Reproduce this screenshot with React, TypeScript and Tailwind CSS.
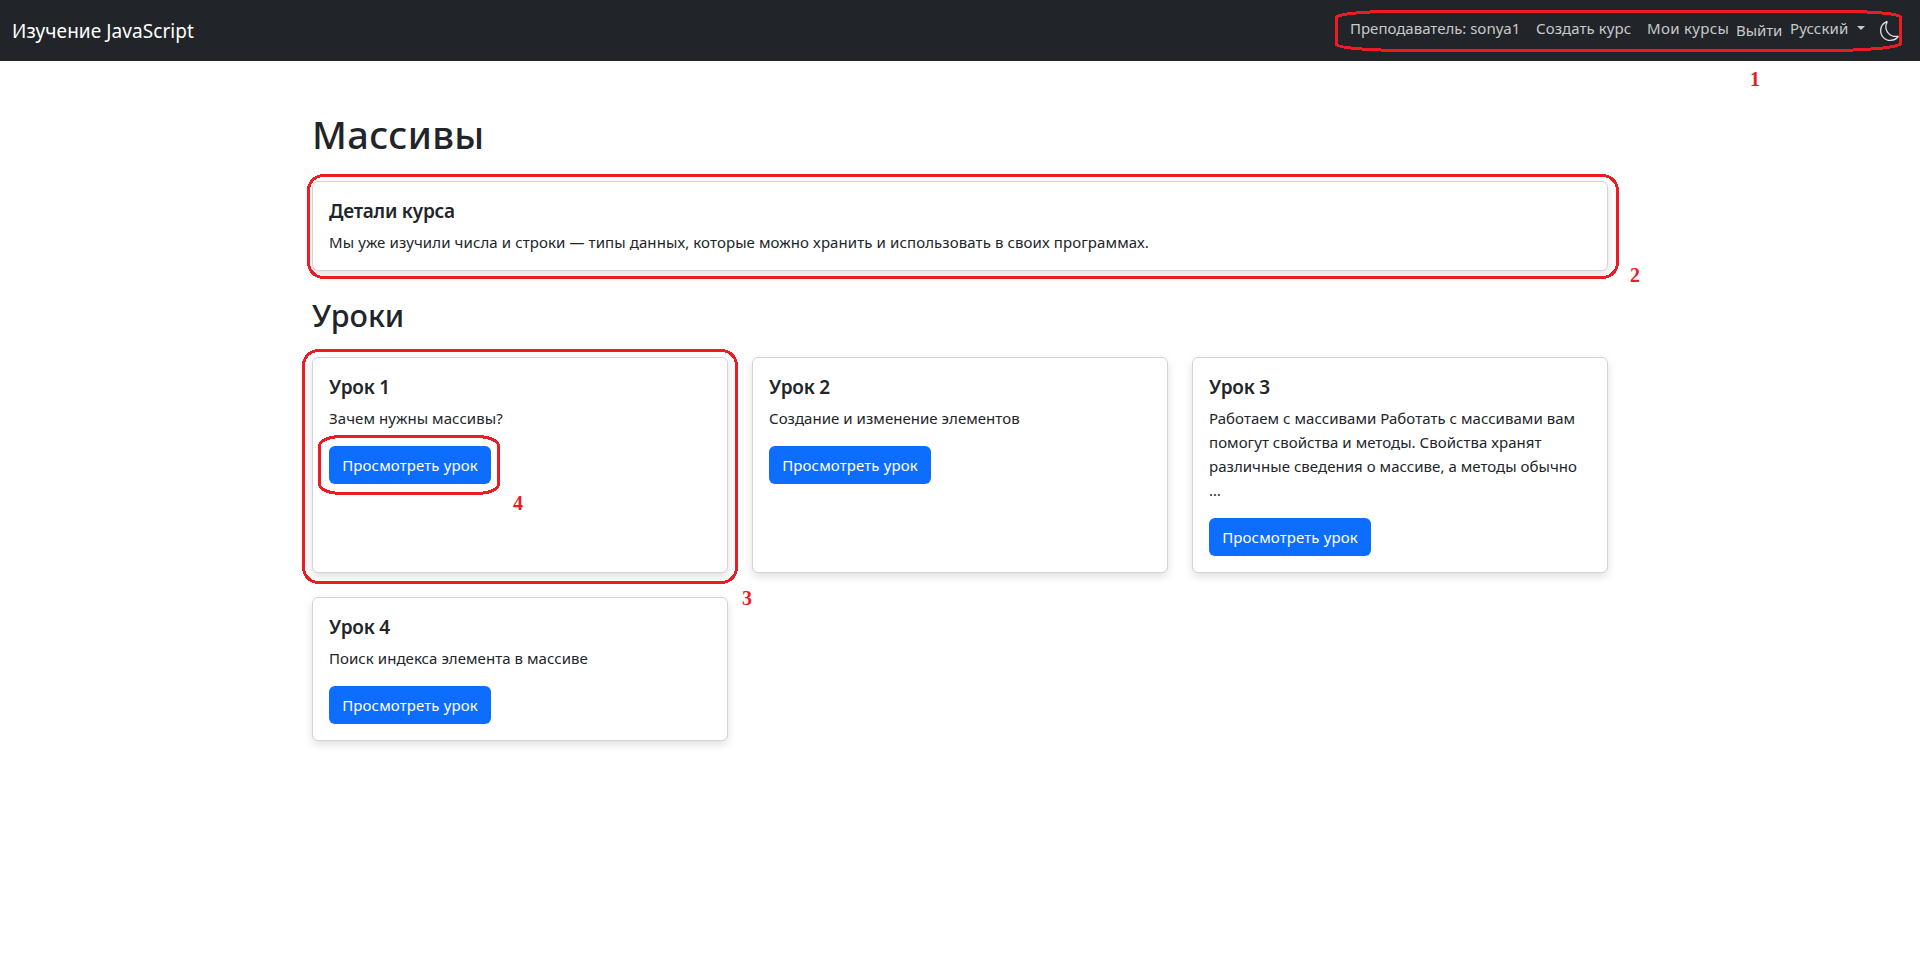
import React from "react";

type Lesson = { title: string; text: string; spacing: string };

const lessons: Lesson[] = [
  { title: "Урок 1", text: "Зачем нужны массивы?", spacing: "tracking-[0.07px]" },
  { title: "Урок 2", text: "Создание и изменение элементов", spacing: "tracking-[0.04px]" },
  {
    title: "Урок 3",
    text: "Работаем с массивами Работать с массивами вам помогут свойства и методы. Свойства хранят различные сведения о массиве, а методы обычно …",
    spacing: "tracking-[0.04px]",
  },
  { title: "Урок 4", text: "Поиск индекса элемента в массиве", spacing: "tracking-[0.05px]" },
];

function Card({ title, children }: { title: string; children: React.ReactNode }) {
  return (
    <div className="rounded-md border border-[#d3d3d4] bg-white p-4 shadow-[0_4px_8px_rgba(0,0,0,0.12)]">
      <h5 className="mb-[7px] pt-px text-[19px] leading-6 font-semibold tracking-[-0.22px]">{title}</h5>
      {children}
    </div>
  );
}

function Moon() {
  return (
    <svg width="20" height="20" viewBox="0 0 16 16" fill="currentColor">
      <path d="M6 .278a.77.77 0 0 1 .08.858 7.2 7.2 0 0 0-.878 3.46c0 4.021 3.278 7.277 7.318 7.277q.792-.001 1.533-.16a.79.79 0 0 1 .81.316.73.73 0 0 1-.031.893A8.35 8.35 0 0 1 8.344 16C3.734 16 0 12.286 0 7.71 0 4.266 2.114 1.312 5.124.06A.75.75 0 0 1 6 .278M4.858 1.311A7.27 7.27 0 0 0 1.025 7.71c0 4.02 3.279 7.276 7.319 7.276a7.32 7.32 0 0 0 5.205-2.162q-.506.063-1.029.063c-4.61 0-8.343-3.714-8.343-8.29 0-1.167.242-2.278.681-3.286" />
    </svg>
  );
}

function Navbar() {
  return (
    <nav className="flex h-[61px] items-start bg-[#212529] px-3 text-[15px] leading-6 text-[#c8c9ca]">
      <a className="mt-4 text-[19px] leading-[30px] tracking-[0.07px] text-white">Изучение JavaScript</a>
      <div className="ml-auto flex items-start pt-4 whitespace-nowrap">
        <a className="w-[186px] pl-2">Преподаватель: sonya1</a>
        <a className="w-[111px] pl-2 tracking-[0.08px]">Создать курс</a>
        <a className="w-[98px] pl-2 tracking-[0.33px]">Мои курсы</a>
        <a className="mt-0.5 -ml-px w-[54px] tracking-[-0.08px]">Выйти</a>
        <a className="flex w-[90px] items-start">
          <span className="w-[67px] tracking-[0.12px]">Русский</span>
          <span className="mt-[10px] h-0 w-0 border-x-[4.8px] border-t-[4.8px] border-x-transparent border-t-current" />
        </a>
        <span className="mt-[5px] w-7 text-[#dee2e6]">
          <Moon />
        </span>
      </div>
    </nav>
  );
}

function Marks() {
  return (
    <div className="pointer-events-none absolute inset-0 font-['Liberation_Serif',serif] text-[20px] leading-5 font-bold text-[#ed1c24]">
      <svg width="1920" height="964" fill="none" stroke="#ed1c24" strokeWidth="3" shapeRendering="crispEdges">
        <path d="M1336.5 17.5A56 6 0 0 1 1392.5 11.5H1842.5A58 5.500 0 0 1 1900.5 17V43.500A76 7 0 0 1 1824.5 50.5H1410.5A74 6 0 0 1 1336.5 44.5Z" />
        <rect x="308.500" y="175.500" width="1309" height="102" rx="15" />
        <rect x="303.500" y="350.500" width="433" height="232" rx="15" />
        <rect x="319.500" y="436.500" width="179" height="57" rx="22" ry="9.500" />
      </svg>
      <span className="absolute top-[69px] left-[1750px]">1</span>
      <span className="absolute top-[265px] left-[1630px]">2</span>
      <span className="absolute top-[588px] left-[742px]">3</span>
      <span className="absolute top-[493px] left-[513px]">4</span>
    </div>
  );
}

export default function App() {
  return (
    <div className="relative h-[964px] w-[1920px] overflow-hidden bg-white font-['Noto_Sans',sans-serif] text-[#212529]">
      <Navbar />
      <main className="mx-auto w-[1296px] pt-[49px]">
        <h1 className="mb-[23px] text-[38px] leading-[48px] font-medium tracking-[0.35px]">Массивы</h1>
        <Card title="Детали курса">
          <p className="text-[15px] leading-6 tracking-[0.1px]">
            Мы уже изучили числа и строки — типы данных, которые можно хранить и использовать в своих программах.
          </p>
        </Card>
        <h2 className="mt-[25px] mb-[23px] text-[30.5px] leading-[38.4px] font-medium">Уроки</h2>
        <div className="grid grid-cols-3 gap-6">
          {lessons.map((l) => (
            <Card key={l.title} title={l.title}>
              <p className={`mb-4 text-[15px] leading-6 ${l.spacing}`}>{l.text}</p>
              <button className="block h-[38px] w-[162px] rounded-md bg-[#0d6efd] text-[15px] leading-6 tracking-[0.12px] text-white">
                Просмотреть урок
              </button>
            </Card>
          ))}
        </div>
      </main>
      <Marks />
    </div>
  );
}
